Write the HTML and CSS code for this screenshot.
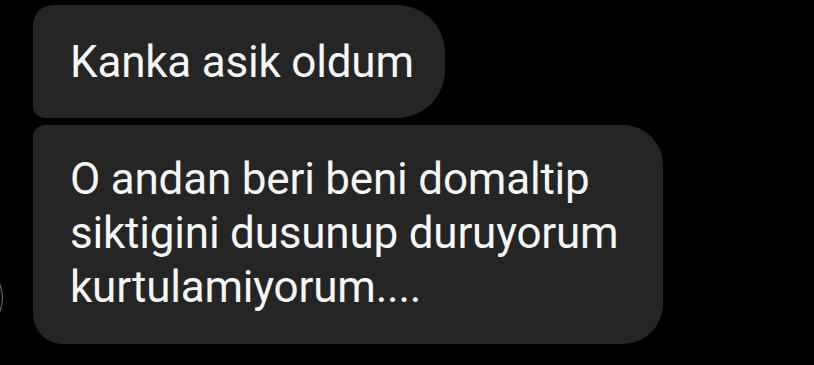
FILE: index.html
```html
<!DOCTYPE html>
<html>
<head>
<meta charset="utf-8">
<link rel="stylesheet" href="styles.css">
</head>
<body>
<div class="chat">
  <div class="bubble first">Kanka asik oldum</div>
  <div class="row">
    <div class="avatar"></div>
    <div class="bubble last">O andan beri beni domaltip<br>siktigini dusunup duruyorum<br>kurtulamiyorum....</div>
  </div>
</div>
</body>
</html>
```
FILE: styles.css
```css
html, body {
  margin: 0;
  background: #000;
}
body {
  width: 814px;
  height: 365px;
  overflow: hidden;
  font-family: Roboto, "Liberation Sans", sans-serif;
  color: #f6f6f6;
}
.chat {
  display: flex;
  flex-direction: column;
  align-items: flex-start;
  gap: 7px;
  padding: 5px 0 0 33px;
}
.row {
  position: relative;
}
.bubble {
  background: #252525;
  font-size: 44px;
  letter-spacing: -0.2px;
}
.first {
  height: 113px;
  box-sizing: border-box;
  display: flex;
  align-items: center;
  padding: 0 30px 0 37px;
  border-radius: 20px 48px 48px 12px;
  width: 412px;
  white-space: nowrap;
}
.last {
  width: 630px;
  box-sizing: border-box;
  padding: 27px 20px 30px 37px;
  line-height: 54px;
  white-space: nowrap;
  border-radius: 12px 40px 40px 30px;
}
.avatar {
  position: absolute;
  left: -104px;
  top: 136px;
  width: 74px;
  height: 74px;
  box-sizing: border-box;
  border-radius: 50%;
  border: 1px solid #777;
  background: #050505;
}
```
